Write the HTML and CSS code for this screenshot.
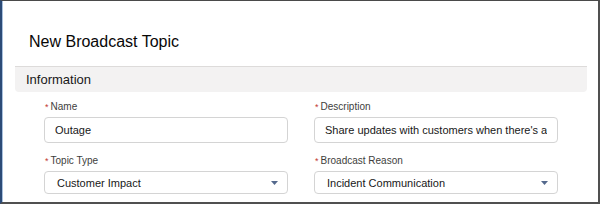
FILE: index.html
```html
<!DOCTYPE html>
<html lang="en">
<head>
    <meta charset="UTF-8">
    <title>New Broadcast Topic</title>
    <link rel="stylesheet" href="styles.css">
</head>
<body>
    <div class="modal">
        <h2 class="modal-title">New Broadcast Topic</h2>
        <div class="section-header">Information</div>
        <div class="form-grid">
            <div class="form-group">
                <label for="name"><abbr class="required">*</abbr>Name</label>
                <input type="text" id="name" value="Outage">
            </div>
            <div class="form-group">
                <label for="description"><abbr class="required">*</abbr>Description</label>
                <input type="text" id="description" value="Share updates with customers when there's an outage">
            </div>
            <div class="form-group">
                <label><abbr class="required">*</abbr>Topic Type</label>
                <div class="combobox">
                    <span>Customer Impact</span>
                    <svg class="arrow" width="7" height="4" viewBox="0 0 7 4"><path d="M0 0h7L3.5 4z"/></svg>
                </div>
            </div>
            <div class="form-group">
                <label><abbr class="required">*</abbr>Broadcast Reason</label>
                <div class="combobox">
                    <span>Incident Communication</span>
                    <svg class="arrow" width="7" height="4" viewBox="0 0 7 4"><path d="M0 0h7L3.5 4z"/></svg>
                </div>
            </div>
        </div>
    </div>
</body>
</html>
```

FILE: styles.css
```css
html, body {
    margin: 0;
    padding: 0;
    background: #fff;
}
body {
    font-family: "Liberation Sans", Arial, sans-serif;
    color: #181818;
}
.modal {
    width: 600px;
    height: 204px;
    box-sizing: border-box;
    border-top: 1px solid #4a4a4a;
    border-left: 2px solid #2c4b77;
    border-right: 2px solid #505050;
    border-bottom: 2px solid #505050;
    box-shadow: inset 1px 0 0 #a9c1de;
    overflow: hidden;
}
.modal-title {
    margin: 0;
    padding: 31px 0 0 27px;
    font-size: 16px;
    line-height: 20px;
    font-weight: normal;
    color: #080707;
}
.section-header {
    margin: 14px 11px 0 13px;
    height: 26px;
    box-sizing: border-box;
    padding-left: 11px;
    border-top: 1px solid #dddbda;
    border-radius: 0 0 4px 4px;
    background: #f3f2f2;
    font-size: 13px;
    line-height: 25px;
}
.form-grid {
    display: grid;
    grid-template-columns: 244px 244px;
    column-gap: 26px;
    row-gap: 11px;
    margin: 8px 0 0 42px;
}
.form-group label {
    display: block;
    height: 14px;
    font-size: 10px;
    line-height: 14px;
    color: #3e3e3c;
    margin-bottom: 3px;
}
.required {
    color: #c23934;
    text-decoration: none;
    font-size: 9px;
    line-height: 0;
    margin: 0 2px 0 1px;
}
input[type="text"] {
    display: block;
    width: 100%;
    height: 26px;
    box-sizing: border-box;
    padding: 0 10px;
    border: 1px solid #d4d4d4;
    border-radius: 4px;
    font-family: inherit;
    font-size: 11px;
    color: #181818;
    outline: none;
}
.combobox {
    display: flex;
    align-items: center;
    justify-content: space-between;
    height: 23px;
    box-sizing: border-box;
    padding: 0 9px 0 12px;
    border: 1px solid #d4d4d4;
    border-radius: 4px;
    font-size: 11px;
}
.arrow {
    fill: #54698d;
}
```
